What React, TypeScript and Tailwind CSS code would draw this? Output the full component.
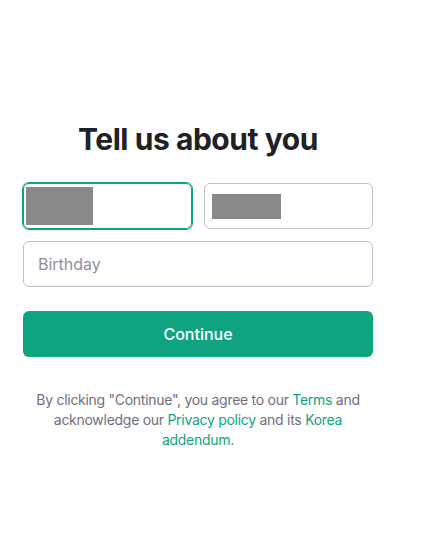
import React from 'react';

const font = { fontFamily: 'Inter, "Noto Sans", sans-serif' };

export default function App() {
    return (
        <div className="min-h-[539px] w-[440px] bg-white" style={font}>
            <div className="ml-[23px] w-[350px] pt-[119px]">
                {/* Heading */}
                <h1 className="text-center text-[30px] leading-[40px] font-bold tracking-[-0.015em] text-[#202123]">
                    Tell us about you
                </h1>

                {/* Name fields */}
                <div className="mt-[24px] grid grid-cols-2 gap-3">
                    <div className="h-[46px] rounded-[6px] border border-[#10a37f] outline outline-1 outline-[#10a37f] flex items-center pl-[2px]">
                        <div className="w-[67px] h-[38px] bg-[#888888]" />
                    </div>
                    <div className="h-[46px] rounded-[6px] border border-[#c2c0d0] flex items-center pl-[7px]">
                        <div className="w-[69px] h-[25px] bg-[#888888]" />
                    </div>
                </div>

                {/* Birthday */}
                <div className="mt-3 h-[46px] rounded-[6px] border border-[#c2c0d0] flex items-center px-[14px]">
                    <span className="text-[16px] text-[#8e8ea0]">Birthday</span>
                </div>

                {/* Continue */}
                <button className="mt-6 h-[46px] w-full rounded-[6px] bg-[#10a37f] text-white text-[16px] font-medium">
                    Continue
                </button>

                {/* Legal */}
                <p className="mt-[33px] px-[6px] text-center text-[14px] leading-[20px] tracking-[-0.02em] text-[#6e6e80]">
                    By clicking "Continue", you agree to our <span className="text-[#10a37f]">Terms</span> and
                    acknowledge our <span className="text-[#10a37f]">Privacy policy</span> and its{' '}
                    <span className="text-[#10a37f]">Korea addendum</span>.
                </p>
            </div>
        </div>
    );
}
